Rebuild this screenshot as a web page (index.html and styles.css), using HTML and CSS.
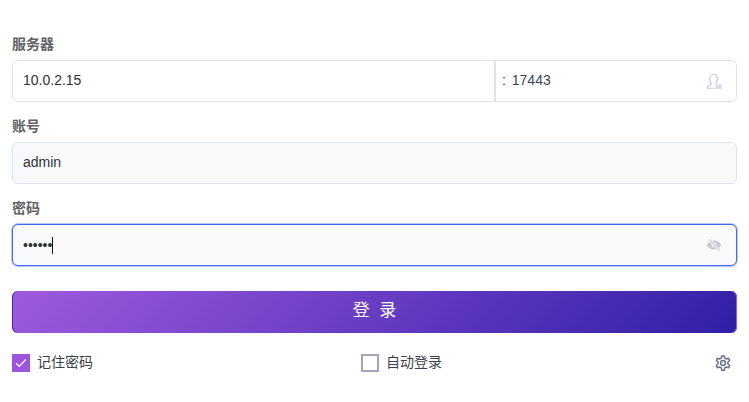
FILE: index.html
```html
<!DOCTYPE html>
<html lang="zh-CN">
<head>
<meta charset="utf-8">
<title>登录</title>
<link rel="stylesheet" href="styles.css">
</head>
<body>
<form class="login">
  <div class="field">
    <div class="label">服务器</div>
    <div class="server">
      <div class="server-host">10.0.2.15</div>
      <div class="server-port">
        <span class="port-text">: 17443</span>
        <svg class="icon-user" width="18" height="18" viewBox="0 0 18 18">
          <path d="M2 16.200c0-2.400 3-2.800 4-3.700.5-.7.4-1.300-.1-1.900C5.100 9.600 4.700 8.500 4.700 7.200c0-2.700 1.600-4.700 3.800-4.700s3.800 2 3.800 4.700c0 1.300-.4 2.400-1.200 3.400-.5.6-.6 1.200-.1 1.900M2 16.200h8" fill="none" stroke="#c3c6d0" stroke-width="1.100"/>
          <rect x="11" y="12.500" width="6" height="4.500" fill="#e6d6f6"/>
        </svg>
      </div>
    </div>
  </div>
  <div class="field">
    <div class="label">账号</div>
    <div class="input input-filled"><span class="value">admin</span></div>
  </div>
  <div class="field">
    <div class="label">密码</div>
    <div class="input input-focus">
      <span class="dots">••••••</span><span class="caret"></span>
      <svg class="icon-eye" width="16" height="16" viewBox="0 0 16 16">
        <path d="M.8 8C2.400 5 5 3.500 8 3.500S13.600 5 15.200 8c-1.600 3-4.200 4.500-7.200 4.500S2.400 11 .8 8z" fill="#c6c9d2"/>
        <circle cx="8" cy="8" r="2.300" fill="#f8fafc"/>
        <path d="M2.800 2.300l10.600 11.400" stroke="#f8fafc" stroke-width="2.600"/>
        <path d="M2.800 2.300l10.600 11.400" stroke="#c6c9d2" stroke-width="1.200"/>
      </svg>
    </div>
  </div>
  <button class="submit" type="button">登 录</button>
  <div class="options">
    <div class="option">
      <span class="box box-on">
        <svg width="18" height="18" viewBox="0 0 18 18"><path d="M4 9.300l3.300 3L13.800 5.500" fill="none" stroke="#fff" stroke-width="1.200"/></svg>
      </span>
      <span class="option-text">记住密码</span>
    </div>
    <div class="option option-mid">
      <span class="box"></span>
      <span class="option-text">自动登录</span>
    </div>
    <svg class="icon-gear" width="18" height="18" viewBox="0 0 24 24" fill="none" stroke="#66718a" stroke-width="2" stroke-linejoin="round">
      <path d="M10.300 2.500h3.400l.6 3 2 1.100 2.900-1 1.700 3-2.300 2v2.800l2.300 2-1.700 3-2.900-1-2 1.100-.6 3h-3.400l-.6-3-2-1.100-2.900 1-1.700-3 2.300-2v-2.800l-2.300-2 1.700-3 2.900 1 2-1.100z"/>
      <circle cx="12" cy="12" r="3.200"/>
    </svg>
  </div>
</form>
</body>
</html>
```
FILE: styles.css
```css
* { box-sizing: border-box; }
html, body { margin: 0; background: #fff; }
body {
  font-family: "Liberation Sans", "Noto Sans CJK SC", sans-serif;
  font-size: 14px;
  color: #303133;
  height: 402px;
  overflow: hidden;
}
.login { padding: 33px 12px 0; }
.field { margin-bottom: 13px; }
.label {
  height: 22px;
  line-height: 22px;
  margin-bottom: 5px;
  font-weight: 700;
  color: #606266;
}
.server {
  display: flex;
  height: 42px;
  border: 1px solid #e0e2e9;
  border-radius: 6px;
  background: #fff;
}
.server-host {
  flex: 0 0 483px;
  padding-left: 10px;
  line-height: 38px;
  border-right: 2px solid #e0e2e9;
}
.server-port {
  flex: 1;
  display: flex;
  align-items: center;
  justify-content: space-between;
  padding: 0 13px 0 6px;
  color: #3b4558;
}
.port-text { line-height: 38px; margin-bottom: 2px; word-spacing: 2px; }
.icon-user { display: block; }
.input {
  display: flex;
  align-items: center;
  height: 42px;
  padding: 0 14px 0 10px;
  border: 1px solid #e0e2e9;
  border-radius: 6px;
}
.input-filled { background: #f8f9fb; }
.input-focus {
  background: #f8fafc;
  border-color: #4468f0;
  box-shadow: 0 0 0 1px #bcc8fa;
}
.value { margin-bottom: 2px; }
.dots { font-size: 14px; color: #303133; }
.caret { width: 1px; height: 17px; background: #111; }
.icon-eye { margin-left: auto; display: block; }
.submit {
  display: block;
  width: 100%;
  height: 42px;
  margin-top: 25px;
  padding: 0 0 8px;
  border: 0;
  border-radius: 6px;
  background: linear-gradient(135deg, #9f5adf 0%, #2f1fa6 100%);
  box-shadow: inset 1px 0 0 #4a2ab0, inset -1px 0 0 #9a58dc;
  color: #fff;
  font: 17px "Liberation Sans", "Noto Sans CJK SC", sans-serif;
  word-spacing: 5px;
}
.options {
  display: flex;
  align-items: center;
  justify-content: space-between;
  margin-top: 20px;
  padding-right: 5px;
}
.option { display: flex; align-items: center; gap: 7px; }
.option-mid { margin-right: 4px; }
.box {
  display: block;
  width: 18px;
  height: 18px;
  border: 2px solid #a4a4bc;
  background: #fff;
}
.box-on { border: 0; background: #9c55dc; }
.box-on svg { display: block; }
.option-text { line-height: 18px; margin-bottom: 2px; color: #3a3f4a; }
.icon-gear { display: block; }
```
